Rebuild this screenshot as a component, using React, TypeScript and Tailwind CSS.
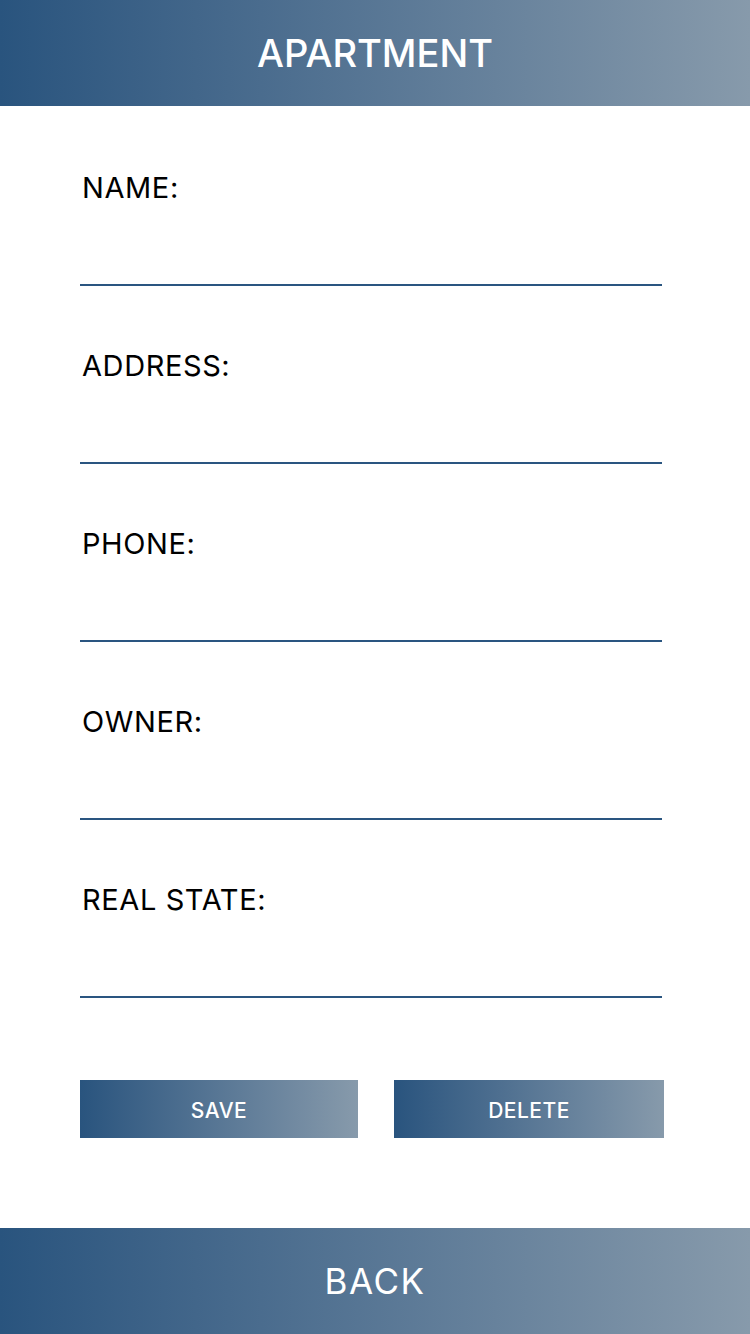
const fields = ["NAME:", "ADDRESS:", "PHONE:", "OWNER:", "REAL STATE:"];

const gradient = "bg-gradient-to-r from-[#29547e] to-[#879aab]";

export default function App() {
  return (
    <div className="flex h-screen w-full flex-col bg-white font-['Inter','Liberation_Sans',sans-serif]">
      {/* Header */}
      <header className={`${gradient} flex h-[106px] shrink-0 items-center justify-center`}>
        <h1 className="text-[38px] leading-none font-medium text-white">APARTMENT</h1>
      </header>

      {/* Form */}
      <div className="flex flex-col gap-[62px] px-[80px] pt-[64px]">
        {fields.map((label) => (
          <div key={label} className="flex w-[582px] flex-col">
            <label className="h-[35px] pl-[2px] text-[29px] leading-[35px] tracking-[0.6px] text-black">{label}</label>
            <div className="h-[79px]" />
            <div className="h-[2px] w-full bg-[#2a5580]" />
          </div>
        ))}
      </div>

      {/* Actions */}
      <div className="mt-[82px] flex gap-[36px] px-[80px]">
        <button className={`${gradient} flex h-[58px] w-[278px] items-center justify-center pt-[3px] text-[21px] font-medium tracking-[0.5px] text-white`}>
          SAVE
        </button>
        <button className={`${gradient} flex h-[58px] w-[270px] items-center justify-center pt-[3px] text-[21px] font-medium tracking-[0.5px] text-white`}>
          DELETE
        </button>
      </div>

      {/* Footer */}
      <footer className={`${gradient} mt-auto flex h-[106px] shrink-0 items-center justify-center`}>
        <span className="text-[35px] leading-none tracking-[1.5px] text-white">BACK</span>
      </footer>
    </div>
  );
}
